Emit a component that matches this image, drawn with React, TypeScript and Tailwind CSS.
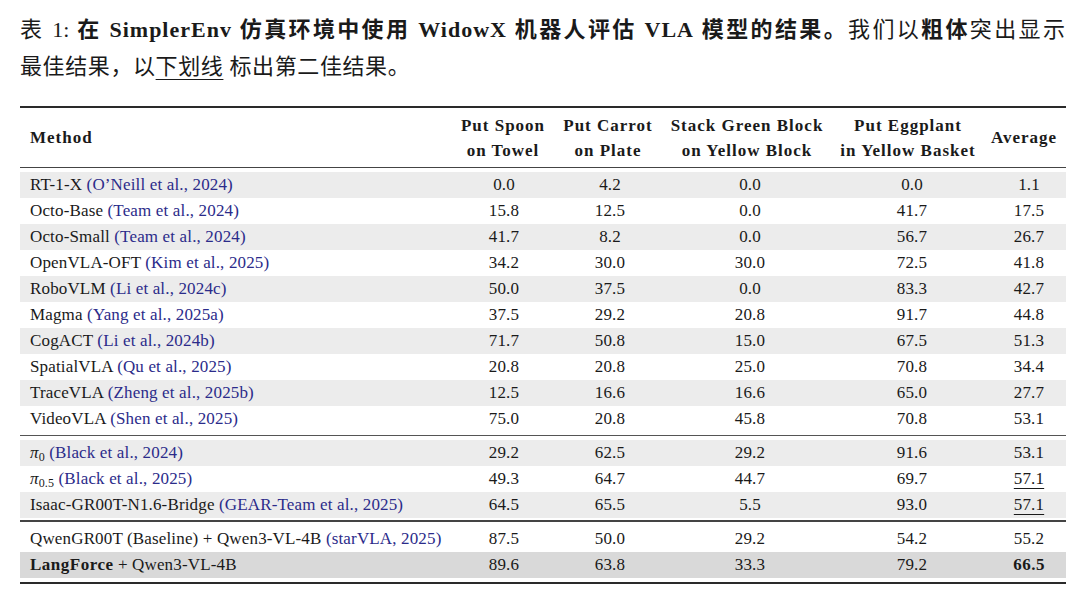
import React from "react";

type Row = {
  name: React.ReactNode;
  cite?: string;
  vals: string[];
  avg: React.ReactNode;
  bg: string;
};

const Cite = ({ children }: { children: React.ReactNode }) => (
  <span className="text-[#2b2b8a]">({children})</span>
);

const Pi = ({ sub }: { sub: string }) => (
  <span>
    <i>π</i>
    <sub className="text-[12px]">{sub}</sub>
  </span>
);

const Second = ({ children }: { children: React.ReactNode }) => (
  <span className="underline decoration-1 underline-offset-[4px]">{children}</span>
);

const group1: Row[] = [
  { name: "RT-1-X", cite: "O’Neill et al., 2024", vals: ["0.0", "4.2", "0.0", "0.0"], avg: "1.1", bg: "bg-[#ececec]" },
  { name: "Octo-Base", cite: "Team et al., 2024", vals: ["15.8", "12.5", "0.0", "41.7"], avg: "17.5", bg: "bg-white" },
  { name: "Octo-Small", cite: "Team et al., 2024", vals: ["41.7", "8.2", "0.0", "56.7"], avg: "26.7", bg: "bg-[#ececec]" },
  { name: "OpenVLA-OFT", cite: "Kim et al., 2025", vals: ["34.2", "30.0", "30.0", "72.5"], avg: "41.8", bg: "bg-white" },
  { name: "RoboVLM", cite: "Li et al., 2024c", vals: ["50.0", "37.5", "0.0", "83.3"], avg: "42.7", bg: "bg-[#ececec]" },
  { name: "Magma", cite: "Yang et al., 2025a", vals: ["37.5", "29.2", "20.8", "91.7"], avg: "44.8", bg: "bg-white" },
  { name: "CogACT", cite: "Li et al., 2024b", vals: ["71.7", "50.8", "15.0", "67.5"], avg: "51.3", bg: "bg-[#ececec]" },
  { name: "SpatialVLA", cite: "Qu et al., 2025", vals: ["20.8", "20.8", "25.0", "70.8"], avg: "34.4", bg: "bg-white" },
  { name: "TraceVLA", cite: "Zheng et al., 2025b", vals: ["12.5", "16.6", "16.6", "65.0"], avg: "27.7", bg: "bg-[#ececec]" },
  { name: "VideoVLA", cite: "Shen et al., 2025", vals: ["75.0", "20.8", "45.8", "70.8"], avg: "53.1", bg: "bg-white" },
];

const group2: Row[] = [
  { name: <Pi sub="0" />, cite: "Black et al., 2024", vals: ["29.2", "62.5", "29.2", "91.6"], avg: "53.1", bg: "bg-[#ececec]" },
  { name: <Pi sub="0.5" />, cite: "Black et al., 2025", vals: ["49.3", "64.7", "44.7", "69.7"], avg: <Second>57.1</Second>, bg: "bg-white" },
  { name: "Isaac-GR00T-N1.6-Bridge", cite: "GEAR-Team et al., 2025", vals: ["64.5", "65.5", "5.5", "93.0"], avg: <Second>57.1</Second>, bg: "bg-[#ececec]" },
];

const group3: Row[] = [
  { name: "QwenGR00T (Baseline) + Qwen3-VL-4B", cite: "starVLA, 2025", vals: ["87.5", "50.0", "29.2", "54.2"], avg: "55.2", bg: "bg-white" },
  {
    name: (
      <span>
        <b className="tracking-[0.5px]">LangForce</b> + Qwen3-VL-4B
      </span>
    ),
    vals: ["89.6", "63.8", "33.3", "79.2"],
    avg: <b className="tracking-[0.5px]">66.5</b>,
    bg: "bg-[#d9d9d9]",
  },
];

const cols = "grid grid-cols-[430px_106px_104px_174px_148px_84px]";

const DataRow = ({ row }: { row: Row }) => (
  <div className={`${cols} h-[26px] items-center gap-x-px ${row.bg}`}>
    <div className="pl-[10px] whitespace-nowrap">
      {row.name}
      {row.cite && (
        <>
          {" "}
          <Cite>{row.cite}</Cite>
        </>
      )}
    </div>
    {row.vals.map((v, i) => (
      <div key={i} className="text-center">
        {v}
      </div>
    ))}
    <div className="text-center">{row.avg}</div>
  </div>
);

export default function App() {
  return (
    <div
      className="w-[1080px] h-[595px] bg-white text-[#1a1a1a] overflow-hidden"
      style={{ fontFamily: '"Liberation Serif", "Noto Sans CJK SC", serif' }}
    >
      <div className="w-[1065px] pl-[20px] pt-[11px] text-[22px] leading-[37px] whitespace-nowrap">
        <div className="text-justify [text-align-last:justify]">
          表 1: <b>在 <span className="tracking-[1px]">SimplerEnv</span> 仿真环境中使用 <span className="tracking-[1px]">WidowX</span> 机器人评估 <span className="tracking-[1px]">VLA</span> 模型的结果。</b>我们以<b>粗体</b>突出显示
        </div>
        <div className="tracking-[0.6px]">
          最佳结果，以<span className="underline decoration-1 underline-offset-[5px]">下划线</span> 标出第二佳结果。
        </div>
      </div>

      <div className="ml-[20px] mt-[21px] w-[1046px] text-[17px] tracking-[0.15px]">
        <div className="h-[2px] bg-[#2a2a2a]" />
        <div className={`${cols} h-[59px] items-center font-bold leading-[25px] tracking-[1px]`}>
          <div className="pl-[10px]">Method</div>
          <div className="text-center">
            Put Spoon
            <br />
            on Towel
          </div>
          <div className="text-center">
            Put Carrot
            <br />
            on Plate
          </div>
          <div className="text-center">
            Stack Green Block
            <br />
            on Yellow Block
          </div>
          <div className="text-center">
            Put Eggplant
            <br />
            in Yellow Basket
          </div>
          <div className="text-center">Average</div>
        </div>
        <div className="h-px bg-[#444]" />
        <div className="h-[4px]" />
        {group1.map((r, i) => (
          <DataRow key={i} row={r} />
        ))}
        <div className="h-[3px]" />
        <div className="h-px bg-[#555]" />
        <div className="h-[4px]" />
        {group2.map((r, i) => (
          <DataRow key={i} row={r} />
        ))}
        <div className="h-[2px]" />
        <div className="h-[1.5px] bg-[#444]" />
        <div className="h-[4px]" />
        {group3.map((r, i) => (
          <DataRow key={i} row={r} />
        ))}
        <div className="h-[4px]" />
        <div className="h-[2px] bg-[#2a2a2a]" />
      </div>
    </div>
  );
}
